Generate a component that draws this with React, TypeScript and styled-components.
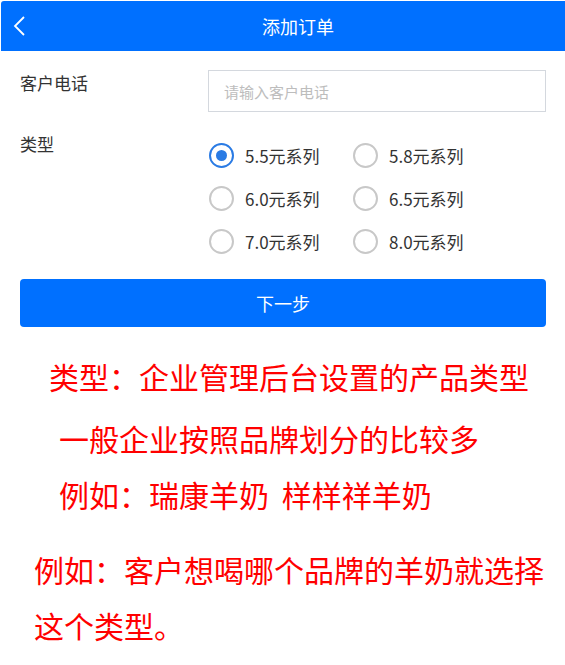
import React, { FC, useState } from 'react';
import styled, { createGlobalStyle } from 'styled-components';

const GlobalStyle = createGlobalStyle`
  html, body {
    margin: 0;
    padding: 0;
    background: #fff;
  }
  body {
    font-family: "Noto Sans CJK SC", "Noto Sans", sans-serif;
    color: #333;
  }
`;

const Page = styled.div`
  width: 565px;
  padding: 1px 0 0 1px;
  box-sizing: border-box;
`;

const Header = styled.header`
  display: flex;
  align-items: center;
  height: 50px;
  background: #0070ff;
  border-top-left-radius: 3px;
  color: #fff;
`;

const BackButton = styled.button`
  display: flex;
  align-items: center;
  justify-content: flex-start;
  width: 30px;
  height: 100%;
  padding: 0 0 0 12px;
  border: 0;
  background: transparent;
  color: #fff;
  cursor: pointer;
`;

const Title = styled.h1`
  flex: 1;
  margin: 0;
  text-align: center;
  font-size: 18px;
  font-weight: 400;
`;

const Form = styled.form`
  display: flex;
  flex-direction: column;
  padding: 19px 19px 0 19px;
`;

const Row = styled.div<{ $gap?: number }>`
  display: flex;
  align-items: flex-start;
  margin-bottom: ${p => p.$gap ?? 0}px;
`;

const Label = styled.label<{ $top: number }>`
  width: 188px;
  margin-top: ${p => p.$top}px;
  font-size: 17px;
  line-height: 24px;
  color: #333;
`;

const Input = styled.input`
  flex: 1;
  height: 42px;
  box-sizing: border-box;
  padding: 0 15px;
  border: 1px solid #d4d8de;
  font-family: inherit;
  font-size: 15px;
  color: #333;
  outline: none;

  &::placeholder {
    color: #bdbdbd;
  }
`;

const RadioGrid = styled.div`
  display: grid;
  grid-template-columns: 144px 144px;
  grid-auto-rows: 43px;
`;

const RadioItem = styled.label`
  display: flex;
  align-items: center;
  gap: 11px;
  font-size: 17px;
  color: #333;
  cursor: pointer;
`;

const RadioCircle = styled.span<{ $checked: boolean }>`
  display: flex;
  align-items: center;
  justify-content: center;
  width: 25px;
  height: 25px;
  box-sizing: border-box;
  margin-left: 1px;
  border-radius: 50%;
  border: 2px solid ${p => (p.$checked ? '#2a7be4' : '#c8c8c8')};

  &::after {
    content: '';
    display: ${p => (p.$checked ? 'block' : 'none')};
    width: 11px;
    height: 11px;
    border-radius: 50%;
    background: #2a7be4;
  }
`;

const SubmitButton = styled.button`
  height: 48px;
  margin-top: 16px;
  border: 0;
  border-radius: 4px;
  background: #0070ff;
  color: #fff;
  font-family: inherit;
  font-size: 18px;
  cursor: pointer;
`;

const Notes = styled.div`
  display: flex;
  flex-direction: column;
  padding-top: 21px;
`;

const Note = styled.p<{ $indent: number; $gap?: number }>`
  margin: 0 0 ${p => p.$gap ?? 0}px 0;
  padding-left: ${p => p.$indent}px;
  color: #ff0000;
  font-size: 30px;
  line-height: 56px;
  word-spacing: 6px;
`;

const options = ['5.5', '5.8', '6.0', '6.5', '7.0', '8.0'];

const App: FC = () => {
  const [selected, setSelected] = useState('5.5');

  return (
    <Page>
      <GlobalStyle />
      <Header>
        <BackButton type="button" aria-label="返回">
          <svg width="13" height="20" viewBox="0 0 13 20" fill="none">
            <path d="M11 1 L2 10 L11 19" stroke="#fff" strokeWidth="1.8" />
          </svg>
        </BackButton>
        <Title>添加订单</Title>
      </Header>

      <Form onSubmit={e => e.preventDefault()}>
        <Row $gap={22}>
          <Label htmlFor="phone" $top={1}>客户电话</Label>
          <Input id="phone" placeholder="请输入客户电话" />
        </Row>
        <Row>
          <Label $top={-2}>类型</Label>
          <RadioGrid>
            {options.map(o => (
              <RadioItem key={o} onClick={() => setSelected(o)}>
                <RadioCircle $checked={selected === o} />
                {o}元系列
              </RadioItem>
            ))}
          </RadioGrid>
        </Row>
        <SubmitButton type="submit">下一步</SubmitButton>
      </Form>

      <Notes>
        <Note $indent={48} $gap={6}>类型：企业管理后台设置的产品类型</Note>
        <Note $indent={58} $gap={19}>
          一般企业按照品牌划分的比较多
          <br />
          例如：瑞康羊奶 样样祥羊奶
        </Note>
        <Note $indent={33}>例如：客户想喝哪个品牌的羊奶就选择这个类型。</Note>
      </Notes>
    </Page>
  );
};

export default App;
